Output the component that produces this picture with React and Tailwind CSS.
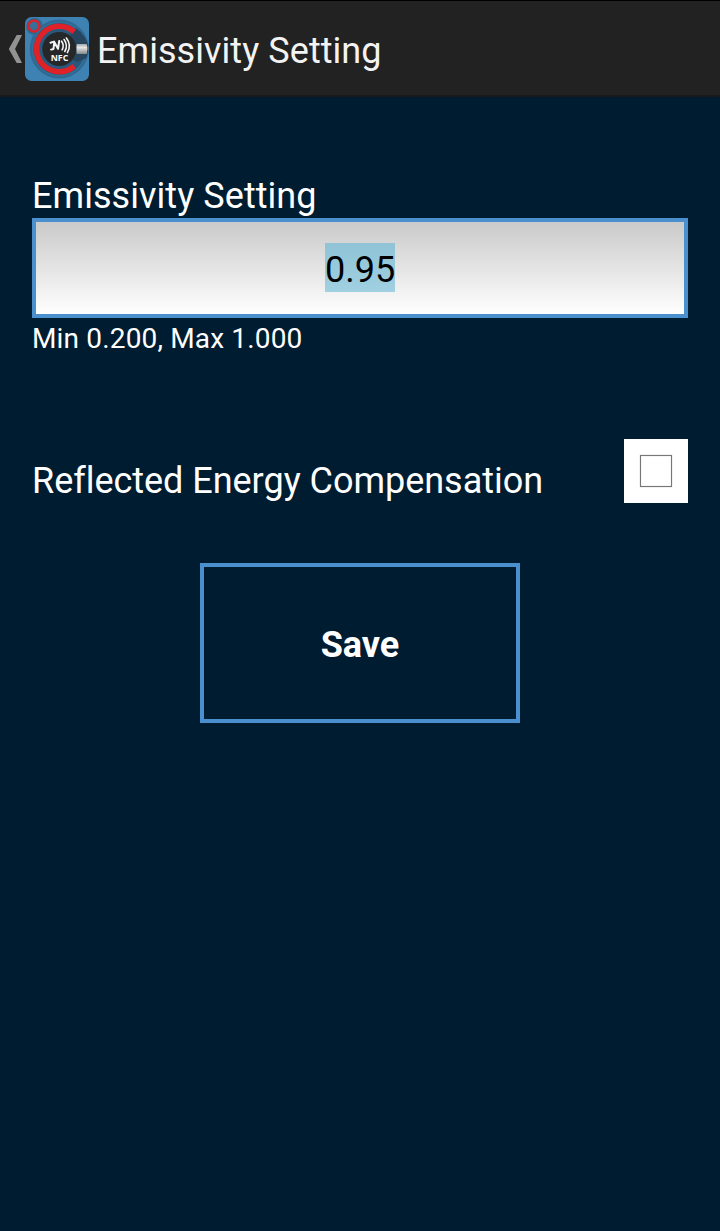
function AppLogo() {
  return (
    <svg width="64" height="64" viewBox="0 0 64 64" className="block shrink-0">
      <defs>
        <clipPath id="tile"><rect width="64" height="64" rx="6.5" /></clipPath>
        <linearGradient id="knob" x1="0" y1="0" x2="0" y2="1">
          <stop offset="0" stopColor="#a5a7a8" />
          <stop offset="0.35" stopColor="#e6e6e6" />
          <stop offset="1" stopColor="#85888a" />
        </linearGradient>
      </defs>
      <g clipPath="url(#tile)">
        <rect width="64" height="64" fill="#3e82b4" />
        <circle cx="9.5" cy="9.5" r="8.5" fill="#30698f" />
        <circle cx="34.3" cy="32" r="29.5" fill="#2f6890" />
        <circle cx="34.3" cy="32" r="27.5" fill="#33709b" />
        <circle cx="34.3" cy="32" r="26" fill="#28587c" />
        <path d="M34 32 51 11q11 8 12.500 20l-2 10-9 4-20-8z" fill="#26455f" />
        <circle cx="34.300" cy="32" r="17" fill="#252729" />
        <path d="M49.2 14.900A22.700 22.700 0 1 0 49.200 49.100" fill="none" stroke="#de2228" strokeWidth="5.600" />
        <circle cx="9" cy="9" r="5.400" fill="#376f98" stroke="#d7232c" strokeWidth="2.500" />
        <rect x="51.500" y="27" width="10.500" height="10" rx="1" fill="url(#knob)" />
        <path d="M62 29.500h2v4h-2z" fill="#777" />
        <path d="M25.500 25.800 29 24.600 33 31.800 34.200 24M29.200 25.500 28.500 32 26 32.600" fill="none" stroke="#f4f4f4" strokeWidth="2" strokeLinecap="round" strokeLinejoin="round" />
        <path d="M36.600 24.200q3 4.200.500 8.600M39.100 22.500q4.200 6 .700 12M41.400 21q5.400 7 1 14.600" fill="none" stroke="#f4f4f4" strokeWidth="1.600" strokeLinecap="round" />
        <text x="34.500" y="44" textAnchor="middle" fontSize="8.800" fontWeight="700" fontFamily="Open Sans, sans-serif" fill="#fff">NFC</text>
      </g>
    </svg>
  );
}

export default function App() {
  return (
    <div className="h-[1231px] w-[720px] overflow-hidden bg-[#001c30] font-['Roboto',sans-serif] text-white">
      <header className="flex h-[97px] items-start border-t border-b-2 border-t-black border-b-[#1a1a1a] bg-[#222222] pl-2 text-[#f3f3f3]">
        <svg width="17" height="96" viewBox="0 0 17 96" className="shrink-0">
          <path d="M8.700 34H14L7 48l7 14H8.700L.8 48z" fill="#929292" />
        </svg>
        <div className="mt-4"><AppLogo /></div>
        <h1 className="mt-[29px] ml-2 text-[36px] leading-[42px] tracking-[0.06px] whitespace-nowrap">Emissivity Setting</h1>
      </header>
      <main className="px-8 pt-[78px]">
        <label className="block h-[43px] text-[36px] leading-[42px] tracking-[0.06px]">Emissivity Setting</label>
        <div className="flex h-[100px] items-center justify-center border-4 border-[#4b90ce] bg-linear-to-b from-[#cacaca] to-white pb-px">
          <span className="h-[49px] w-[70px] bg-[#92c5d8] bg-linear-to-b from-[#8fc3d5] to-[#a0d0e1] pt-[6px] text-center text-[36px] leading-[42px] text-black">0.95</span>
        </div>
        <p className="mt-1 h-[33px] text-[28px] leading-[33px] tracking-[0.16px]">Min 0.200, Max 1.000</p>
        <div className="mt-[84px] flex h-16 justify-between">
          <span className="mt-[21px] text-[36px] leading-[42px] tracking-[-0.03px] whitespace-nowrap">Reflected Energy Compensation</span>
          <span className="flex size-16 items-center justify-center bg-white">
            <span className="size-8 border border-[#777777] shadow-[0_0_1px_#aaaaaa,inset_0_0_1px_#999999]" />
          </span>
        </div>
        <button className="mx-auto mt-[60px] flex h-[160px] w-[320px] items-center justify-center border-4 border-[#4b90ce] pt-[4px] text-[36px] leading-[42px] font-bold">Save</button>
      </main>
    </div>
  );
}
